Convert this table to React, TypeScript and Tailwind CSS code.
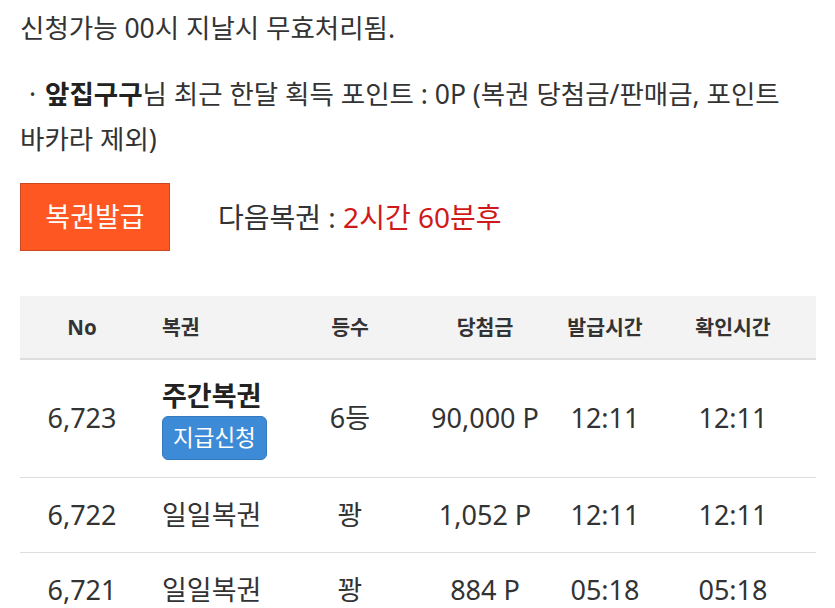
import React from 'react';

interface LottoRow {
  no: string;
  name: string;
  weekly?: boolean;
  rank: string;
  prize: string;
  issued: string;
  checked: string;
}

const rows: LottoRow[] = [
  { no: '6,723', name: '주간복권', weekly: true, rank: '6등', prize: '90,000 P', issued: '12:11', checked: '12:11' },
  { no: '6,722', name: '일일복권', rank: '꽝', prize: '1,052 P', issued: '12:11', checked: '12:11' },
  { no: '6,721', name: '일일복권', rank: '꽝', prize: '884 P', issued: '05:18', checked: '05:18' },
];

const cols = 'grid grid-cols-[124px_146px_120px_150px_90px_166px]';

const App: React.FC = () => {
  return (
    <div className="w-[835px] h-[608px] overflow-hidden bg-white px-5 font-['Noto_Sans','Noto_Sans_CJK_KR',sans-serif] text-[#333]">
      <p className="pt-[6px] text-[26.5px] leading-[44px]">신청가능 00시 지날시 무효처리됨.</p>

      <p className="mt-[22px] w-[795px] indent-[9px] text-[26.5px] leading-[45px] break-keep">
        ·&nbsp;<b className="font-bold text-[#222] ml-[2px]">앞집구구</b>님 최근 한달 획득 포인트 : 0P (복권 당첨금/판매금, 포인트 바카라 제외)
      </p>

      {/* issue button + next timer */}
      <div className="mt-[21px] flex items-center">
        <button className="w-[150px] h-[68px] bg-[#ff5722] border border-[#c94a22] text-white text-[27px]">
          복권발급
        </button>
        <span className="ml-[48px] text-[28px]">
          다음복권 : <span className="text-[#d0191b]">2시간 60분후</span>
        </span>
      </div>

      {/* history table */}
      <div className="mt-[45px] w-[796px]">
        <div className={`${cols} h-[64px] items-center bg-[#f3f3f3] border-b-2 border-[#dddddd] text-[20.5px] font-bold text-[#333]`}>
          <div className="text-center">No</div>
          <div className="pl-[18px]">복권</div>
          <div className="text-center">등수</div>
          <div className="text-center">당첨금</div>
          <div className="text-center">발급시간</div>
          <div className="text-center">확인시간</div>
        </div>

        {rows.map((r) => (
          <div
            key={r.no}
            className={`${cols} items-center border-b border-[#dddddd] text-[27px] ${r.weekly ? 'h-[118px]' : 'h-[75px]'}`}
          >
            <div className="text-center">{r.no}</div>
            <div className="pl-[18px]">
              {r.weekly ? (
                <div className="flex flex-col items-start pt-[2px]">
                  <span className="font-bold text-[#222] leading-[32px]">{r.name}</span>
                  <span className="mt-[4px] h-[44px] px-[10px] flex items-center rounded-[6px] bg-[#3d8bd6] border border-[#3479be] text-white text-[22.5px]">
                    지급신청
                  </span>
                </div>
              ) : (
                r.name
              )}
            </div>
            <div className="text-center">{r.rank}</div>
            <div className="text-center">{r.prize}</div>
            <div className="text-center">{r.issued}</div>
            <div className="text-center">{r.checked}</div>
          </div>
        ))}
      </div>
    </div>
  );
};

export default App;
